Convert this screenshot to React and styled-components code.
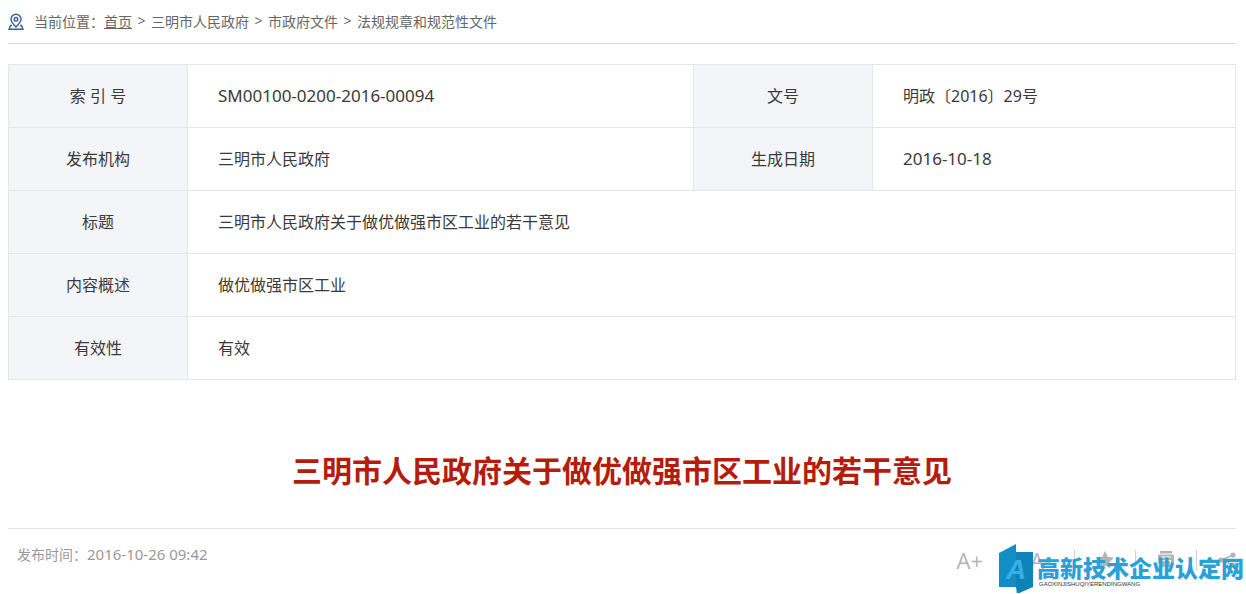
import styled, { createGlobalStyle } from "styled-components";

const GlobalStyle = createGlobalStyle`
  body {
    margin: 0;
    background-color: #fff;
    font-family: "Noto Sans", "Noto Sans CJK SC", sans-serif;
    color: #3a3a3a;
  }
`;

const Page = styled.div`
  position: relative;
  padding: 0 10px 2px 8px;
`;

const Breadcrumb = styled.nav`
  display: flex;
  align-items: center;
  height: 41px;
  padding-bottom: 2px;
  border-bottom: 1px solid #d9d9d9;
  font-size: 14px;
  color: #666;
`;

const PinIcon = styled.svg`
  width: 16px;
  height: 18px;
  margin: 2px 10px 0 0;
`;

const Crumb = styled.a`
  color: #666;
  text-decoration: ${(props) => (props.$underline ? "underline" : "none")};
`;

const Separator = styled.span`
  width: 19px;
  text-align: center;
`;

const InfoTable = styled.table`
  width: 100%;
  margin-top: 20px;
  border-collapse: collapse;
  table-layout: fixed;
  font-size: 16px;
`;

const LabelCol = styled.col`
  width: 179px;
`;

const ShortCol = styled.col`
  width: 363px;
`;

const Label = styled.th`
  height: 60px;
  padding: 0 0 2px;
  border: 1px solid #e4e7ea;
  background-color: #f3f5f9;
  font-weight: normal;
  text-align: center;
`;

const Value = styled.td`
  padding: 0 30px 2px;
  border: 1px solid #e4e7ea;
`;

const Digits = styled.span`
  font-size: ${(props) => (props.$small ? "15px" : "17px")};
`;

const Title = styled.h1`
  margin: 68px 0 34px;
  font-size: 30px;
  line-height: 46px;
  font-weight: bold;
  text-align: center;
  color: #b51c0c;
`;

const Meta = styled.div`
  display: flex;
  justify-content: space-between;
  align-items: flex-start;
  padding-left: 9px;
  border-top: 1px solid #e2e2e2;
  color: #999;
`;

const PublishTime = styled.p`
  margin: 0;
  font-size: 14px;
  line-height: 50px;
`;

const Tools = styled.div`
  display: flex;
  align-items: center;
  height: 62px;
`;

const Tool = styled.button`
  display: flex;
  align-items: center;
  height: 20px;
  padding: 0 ${(props) => (props.$text ? "23px" : "21px")};
  border: none;
  background: none;
  color: #b3b3b3;
  font-family: "Open Sans", sans-serif;
  font-size: 22px;
  line-height: 20px;
  cursor: pointer;

  & + & {
    border-left: 1px solid #d0d0d0;
  }

  &:last-child {
    padding-right: 0;
  }
`;

const ToolIcon = styled.svg`
  width: 18px;
  height: 18px;
  fill: #b3b3b3;
`;

const Brand = styled.div`
  position: absolute;
  right: 2px;
  top: 544px;
  display: flex;
  align-items: flex-start;
  gap: 4px;
`;

const BrandLogo = styled.svg`
  width: 34px;
  height: 50px;
`;

const BrandText = styled.div`
  padding-top: 12px;
`;

const BrandName = styled.div`
  font-size: 23px;
  line-height: 25px;
  font-weight: 900;
  color: #2a9fd8;
`;

const BrandPinyin = styled.div`
  padding-left: 2px;
  font-family: "Liberation Sans", sans-serif;
  font-size: 6px;
  line-height: 6px;
  color: #333;
`;

function App() {
  return (
    <>
      <GlobalStyle />
      <Page>
        <Breadcrumb>
          <PinIcon viewBox="0 0 16 18" fill="none" stroke="#34609f" strokeWidth="1.4">
            <path d="M8 14C5 11 3 8.800 3 6.200a5 5 0 0 1 10 0c0 2.600-2 4.800-5 7.800z" />
            <circle cx="8" cy="6.300" r="1.800" />
            <path d="M4 12.500H2.500L1 16.300h14l-1.500-3.800H12" />
          </PinIcon>
          当前位置：
          <Crumb href="#" $underline>首页</Crumb>
          <Separator>&gt;</Separator>
          <Crumb href="#">三明市人民政府</Crumb>
          <Separator>&gt;</Separator>
          <Crumb href="#">市政府文件</Crumb>
          <Separator>&gt;</Separator>
          <Crumb href="#">法规规章和规范性文件</Crumb>
        </Breadcrumb>

        <InfoTable>
          <colgroup>
            <LabelCol />
            <col />
            <LabelCol />
            <ShortCol />
          </colgroup>
          <tbody>
            <tr>
              <Label scope="row">索 引 号</Label>
              <Value>
                <Digits>SM00100-0200-2016-00094</Digits>
              </Value>
              <Label scope="row">文号</Label>
              <Value>明政〔2016〕29号</Value>
            </tr>
            <tr>
              <Label scope="row">发布机构</Label>
              <Value>三明市人民政府</Value>
              <Label scope="row">生成日期</Label>
              <Value>
                <Digits>2016-10-18</Digits>
              </Value>
            </tr>
            <tr>
              <Label scope="row">标题</Label>
              <Value colSpan={3}>三明市人民政府关于做优做强市区工业的若干意见</Value>
            </tr>
            <tr>
              <Label scope="row">内容概述</Label>
              <Value colSpan={3}>做优做强市区工业</Value>
            </tr>
            <tr>
              <Label scope="row">有效性</Label>
              <Value colSpan={3}>有效</Value>
            </tr>
          </tbody>
        </InfoTable>

        <Title>三明市人民政府关于做优做强市区工业的若干意见</Title>

        <Meta>
          <PublishTime>
            发布时间：<Digits $small>2016-10-26 09:42</Digits>
          </PublishTime>
          <Tools>
            <Tool type="button" $text>A+</Tool>
            <Tool type="button" $text>A-</Tool>
            <Tool type="button" aria-label="收藏">
              <ToolIcon viewBox="0 0 18 18">
                <path d="M9 0l2.800 5.800 6.200.9-4.500 4.400 1.100 6.300L9 14.400l-5.600 3 1.100-6.300L0 6.700l6.200-.9z" />
              </ToolIcon>
            </Tool>
            <Tool type="button" aria-label="打印">
              <ToolIcon viewBox="0 0 18 18">
                <path d="M3 0h12v2.500H3zM2 3.500h14a1 1 0 0 1 1 1V12h-3V9H4v3H1V4.500a1 1 0 0 1 1-1zM5 10h8v6H5z" />
                <path d="M4 6h10" stroke="#fff" strokeWidth="1" />
              </ToolIcon>
            </Tool>
            <Tool type="button" aria-label="分享">
              <ToolIcon viewBox="0 0 18 18">
                <circle cx="15" cy="4" r="2.600" />
                <circle cx="3" cy="9" r="2.600" />
                <circle cx="15" cy="14" r="2.600" />
                <path d="M15 4L3 9l12 5" fill="none" stroke="#b3b3b3" strokeWidth="1.500" />
              </ToolIcon>
            </Tool>
          </Tools>
        </Meta>

        <Brand>
          <BrandLogo viewBox="0 0 34 50">
            <path d="M0 9L17 0v43H0z" fill="#128ec6" />
            <path d="M17 8h17v35l-16 7-1-7z" fill="#0f83b8" />
            <text
              x="17"
              y="35"
              textAnchor="middle"
              fontFamily="Liberation Sans, sans-serif"
              fontSize="28"
              fontWeight="bold"
              fontStyle="italic"
              fill="#35b0e6"
            >
              A
            </text>
          </BrandLogo>
          <BrandText>
            <BrandName>高新技术企业认定网</BrandName>
            <BrandPinyin>GAOXINJISHUQIYERENDINGWANG</BrandPinyin>
          </BrandText>
        </Brand>
      </Page>
    </>
  );
}

export default App;
